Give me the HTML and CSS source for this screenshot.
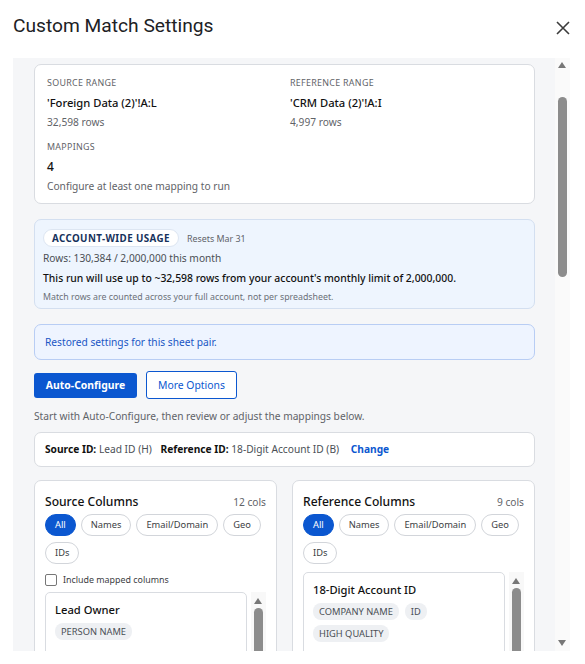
FILE: index.html
```html
<!DOCTYPE html>
<html lang="en">
  <head>
    <meta charset="utf-8">
    <title>Custom Match Settings</title>
    <link rel="stylesheet" href="styles.css">
  </head>
  <body>
    <div class="dialog">
      <div class="head">
        <h1>Custom Match Settings</h1>
        <svg class="close" width="14" height="14" viewBox="0 0 14 14"><path d="M1 1L13 13M13 1L1 13" stroke="#3c3c3c" stroke-width="1.6" fill="none"/></svg>
      </div>

      <div class="body">
        <div class="scroll">

          <div class="card summary">
            <div>
              <div class="label">Source range</div>
              <div class="value">'Foreign Data (2)'!A:L</div>
              <div class="muted">32,598 rows</div>
            </div>
            <div>
              <div class="label">Reference range</div>
              <div class="value">'CRM Data (2)'!A:I</div>
              <div class="muted">4,997 rows</div>
            </div>
            <div class="full">
              <div class="label gap">Mappings</div>
              <div class="value big">4</div>
              <div class="muted">Configure at least one mapping to run</div>
            </div>
          </div>

          <div class="card usage">
            <div class="usage-top">
              <span class="pill">ACCOUNT-WIDE USAGE</span>
              <span class="resets">Resets Mar 31</span>
            </div>
            <div class="rows">Rows: 130,384 / 2,000,000 this month</div>
            <div class="warn">This run will use up to ~32,598 rows from your account's monthly limit of 2,000,000.</div>
            <div class="note">Match rows are counted across your full account, not per spreadsheet.</div>
          </div>

          <div class="card restored">Restored settings for this sheet pair.</div>

          <div class="actions">
            <button class="btn primary">Auto-Configure</button>
            <button class="btn outline">More Options</button>
          </div>
          <p class="hint">Start with Auto-Configure, then review or adjust the mappings below.</p>

          <div class="card ids">
            <b>Source ID:</b> Lead ID (H)
            <b class="sp">Reference ID:</b> 18-Digit Account ID (B)
            <a class="change">Change</a>
          </div>

          <div class="cols">
            <div class="card colpanel">
              <div class="colhead"><span class="coltitle">Source Columns</span><span class="count">12 cols</span></div>
              <div class="chips">
                <span class="chip on">All</span>
                <span class="chip">Names</span>
                <span class="chip">Email/Domain</span>
                <span class="chip">Geo</span>
                <span class="chip">IDs</span>
              </div>
              <label class="check"><span class="box"></span>Include mapped columns</label>
              <div class="list">
                <div class="listbox">
                  <div class="item">
                    <div class="itemname">Lead Owner</div>
                    <div class="tags"><span class="tag">PERSON NAME</span></div>
                  </div>
                </div>
                <div class="minibar"><span class="up"></span><span class="thumb"></span></div>
              </div>
            </div>

            <div class="card colpanel">
              <div class="colhead"><span class="coltitle">Reference Columns</span><span class="count">9 cols</span></div>
              <div class="chips">
                <span class="chip on">All</span>
                <span class="chip">Names</span>
                <span class="chip">Email/Domain</span>
                <span class="chip">Geo</span>
                <span class="chip">IDs</span>
              </div>
              <div class="list ref">
                <div class="listbox">
                  <div class="item">
                    <div class="itemname">18-Digit Account ID</div>
                    <div class="tags"><span class="tag">COMPANY NAME</span><span class="tag">ID</span><span class="tag">HIGH QUALITY</span></div>
                  </div>
                </div>
                <div class="minibar"><span class="up"></span><span class="thumb"></span></div>
              </div>
            </div>
          </div>

        </div>
        <div class="vbar">
          <span class="up"></span>
          <span class="thumb"></span>
          <span class="down"></span>
        </div>
      </div>
    </div>
  </body>
</html>
```

FILE: styles.css
```css
* {
  box-sizing: border-box;
}

body {
  margin: 0;
  font-family: "Noto Sans", "Open Sans", sans-serif;
  font-size: 10.2px;
  color: #202124;
  background: #fff;
}

.dialog {
  height: 664px;
  display: flex;
  flex-direction: column;
  padding: 0 15px 13px 13px;
}

/* header */
.head {
  height: 58px;
  display: flex;
  justify-content: space-between;
  align-items: flex-start;
  padding-top: 14px;
}
.head h1 {
  margin: 0;
  font-family: Roboto, sans-serif;
  font-weight: 400;
  font-size: 19.2px;
  line-height: 24px;
  color: #202124;
}
.close {
  margin-top: 7px;
}

/* scrolling body */
.body {
  flex: 1;
  display: flex;
  min-height: 0;
  background: #f5f6f8;
}
.scroll {
  flex: 1;
  overflow: hidden;
  padding: 6px 20px 0 21px;
}
.vbar {
  width: 15px;
  background: #fafafa;
  position: relative;
}
.vbar .up, .minibar .up {
  position: absolute;
  left: 3px;
  top: 4px;
  border-left: 4.5px solid transparent;
  border-right: 4.5px solid transparent;
  border-bottom: 6px solid #777;
}
.vbar .down {
  position: absolute;
  left: 3px;
  bottom: 5px;
  border-left: 4.5px solid transparent;
  border-right: 4.5px solid transparent;
  border-top: 6px solid #777;
}
.vbar .thumb {
  position: absolute;
  left: 3px;
  top: 39px;
  width: 9px;
  height: 180px;
  border-radius: 5px;
  background: #8c8c8c;
}

.card {
  background: #fff;
  border: 1px solid #d9dce1;
  border-radius: 7px;
}

/* summary */
.summary {
  display: grid;
  grid-template-columns: 243px 1fr;
  padding: 11px 12px 9px;
}
.summary .full {
  grid-column: 1 / 3;
}
.label {
  font-size: 8.9px;
  line-height: 14px;
  text-transform: uppercase;
  letter-spacing: 0.3px;
  color: #5f6368;
}
.label.gap {
  margin-top: 10px;
}
.value {
  margin-top: 4px;
  font-size: 11.2px;
  line-height: 18px;
  font-weight: 500;
  color: #111;
}
.value.big {
  font-size: 12px;
}
.muted {
  margin-top: 2px;
  line-height: 16px;
  color: #5f6368;
}

/* usage */
.usage {
  margin-top: 15px;
  background: #eef5fe;
  border-color: #d3dff0;
  padding: 9px 8px 4px;
}
.usage-top {
  display: flex;
  align-items: center;
}
.pill {
  height: 18px;
  line-height: 17px;
  padding: 0 8px;
  border-radius: 9px;
  background: #fff;
  border: 1px solid #dde6f2;
  font-size: 9.8px;
  font-weight: 700;
  letter-spacing: 0.4px;
  color: #16325c;
}
.resets {
  margin-left: 8px;
  font-size: 8.9px;
  color: #5f6368;
}
.rows {
  margin-top: 3px;
  line-height: 16px;
  color: #4a4f55;
}
.warn {
  margin-top: 4px;
  line-height: 16px;
  font-size: 10.4px;
  font-weight: 500;
  color: #111;
}
.note {
  margin-top: 4px;
  line-height: 14px;
  font-size: 8.8px;
  color: #6b7078;
}

/* restored */
.restored {
  margin-top: 15px;
  height: 36px;
  line-height: 34px;
  padding: 0 10px;
  background: #eef4ff;
  border-color: #b8cdf4;
  color: #1a56c4;
}

/* buttons */
.actions {
  margin-top: 11px;
  display: flex;
  align-items: center;
  gap: 9px;
}
.btn {
  font-family: inherit;
  font-size: 10.4px;
  border-radius: 3px;
  cursor: pointer;
}
.btn.primary {
  width: 103px;
  height: 25px;
  background: #0b57d0;
  border: none;
  color: #fff;
  font-weight: 700;
}
.btn.outline {
  width: 91px;
  height: 28px;
  background: #fff;
  border: 1px solid #0b57d0;
  color: #0b57d0;
}
.hint {
  margin: 9px 0 0;
  line-height: 16px;
  color: #5f6368;
}

/* ids */
.ids {
  margin-top: 8px;
  height: 35px;
  line-height: 33px;
  padding: 0 10px;
  color: #4a4f55;
}
.ids b {
  color: #111;
  font-weight: 700;
}
.ids .sp {
  margin-left: 6px;
}
.change {
  margin-left: 9px;
  color: #0b57d0;
  font-weight: 700;
}

/* column pickers */
.cols {
  margin-top: 13px;
  display: grid;
  grid-template-columns: 1fr 1fr;
  gap: 15px;
}
.colpanel {
  padding: 12px 10px 0 10px;
  height: 200px;
}
.colhead {
  display: flex;
  justify-content: space-between;
  align-items: baseline;
}
.coltitle {
  font-size: 12.1px;
  font-weight: 500;
  color: #111;
}
.count {
  color: #5f6368;
}
.chips {
  margin-top: 4px;
  display: flex;
  flex-wrap: wrap;
  gap: 6px 5px;
}
.chip {
  height: 22px;
  line-height: 20px;
  padding: 0 9px;
  border: 1px solid #d2d5da;
  border-radius: 11px;
  background: #fff;
  font-size: 9.3px;
  color: #3c4043;
}
.chip.on {
  background: #0b57d0;
  border-color: #0b57d0;
  color: #fff;
  padding: 0 9px;
}
.check {
  margin-top: 9px;
  display: flex;
  align-items: center;
  font-size: 8.9px;
  color: #3c4043;
}
.box {
  width: 12px;
  height: 12px;
  margin-right: 6px;
  border: 1px solid #777;
  border-radius: 2px;
  background: #fff;
}
.list {
  margin-top: 6px;
  display: flex;
  gap: 4px;
}
.list.ref {
  margin-top: 8px;
}
.listbox {
  flex: 1;
  height: 100px;
  border: 1px solid #d9dce1;
  border-radius: 5px;
  background: #fff;
  padding: 8px 9px;
}
.itemname {
  font-size: 11.2px;
  line-height: 18px;
  font-weight: 500;
  color: #111;
}
.tags {
  margin-top: 4px;
  display: flex;
  flex-wrap: wrap;
  gap: 5px 6px;
}
.tag {
  height: 17px;
  line-height: 17px;
  padding: 0 6px;
  border-radius: 8px;
  background: #eef0f3;
  font-size: 9.3px;
  color: #4a4f55;
}
.minibar {
  width: 15px;
  height: 100px;
  background: #f8f8f8;
  position: relative;
}
.minibar .up {
  top: 6px;
}
.minibar .thumb {
  position: absolute;
  left: 3px;
  top: 16px;
  width: 9px;
  height: 90px;
  border-radius: 5px;
  background: #8c8c8c;
}
```
